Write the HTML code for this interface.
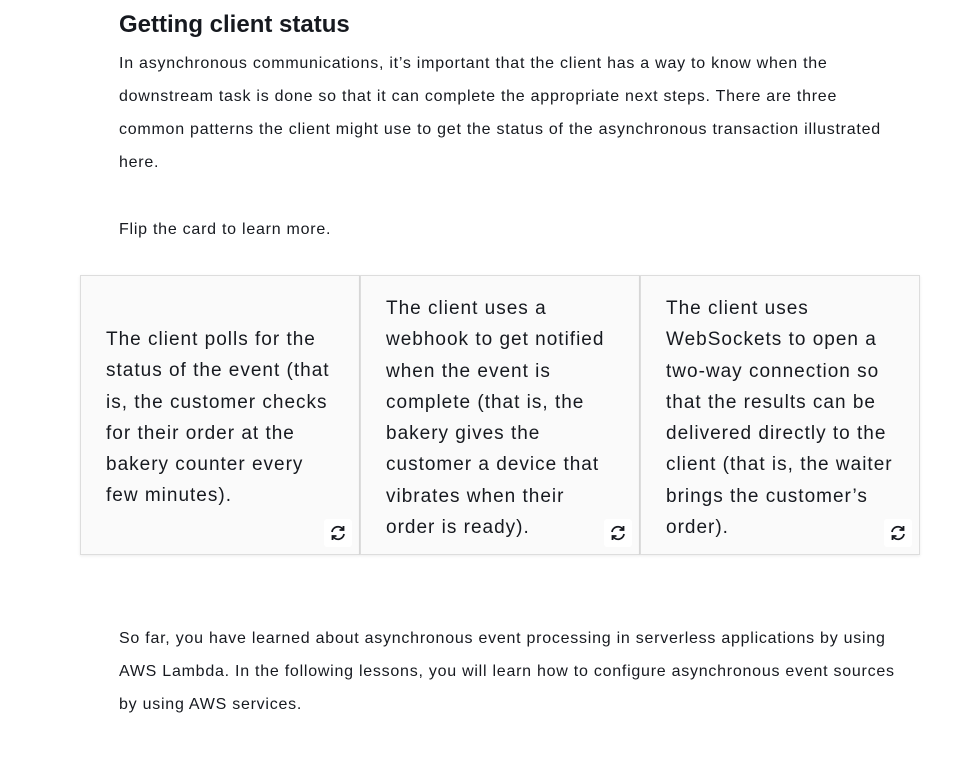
<!DOCTYPE html>
<html><head><style>
body{margin:0;width:976px;height:767px;background:#fff;font-family:"Liberation Sans",sans-serif;color:#16191f;position:relative;overflow:hidden}
h2{position:absolute;left:119px;top:9px;margin:0;font-size:24px;font-weight:bold;line-height:32px}
.p{position:absolute;left:119px;width:860px;font-size:16px;line-height:33px;margin:0;white-space:nowrap;letter-spacing:0.75px}
.card{position:absolute;top:275px;width:280px;height:280px;background:#fafafa;border:1px solid #ddd;box-sizing:border-box;box-shadow:0 1px 3px rgba(0,0,0,.08)}
.card div{position:absolute;left:25px;right:0;font-size:19px;line-height:31.3px;white-space:nowrap;letter-spacing:1px}
.ic{position:absolute;left:243px;top:243px;width:28px;height:28px;background:#fff;border-radius:3px}
.ic svg{position:absolute;left:5px;top:5px}
</style></head><body>
<h2>Getting client status</h2>
<p class="p" style="top:47px">In asynchronous communications, it’s important that the client has a way to know when the<br>downstream task is done so that it can complete the appropriate next steps. There are three<br>common patterns the client might use to get the status of the asynchronous transaction illustrated<br>here.</p>
<p class="p" style="top:213px">Flip the card to learn more.</p>

<div class="card" style="left:80px"><div style="top:48px">The client polls for the<br>status of the event (that<br>is, the customer checks<br>for their order at the<br>bakery counter every<br>few minutes).</div><span class="ic"><svg width="18" height="18" viewBox="0 0 18 18" fill="none" stroke="#16191f" stroke-width="1.8"><path d="M3 8a6 6 0 0 1 11-2.5"/><path d="M15 10a6 6 0 0 1-11 2.5"/><path d="M14.5 2v4h-4"/><path d="M3.5 16v-4h4"/></svg></span></div>
<div class="card" style="left:360px"><div style="top:17px">The client uses a<br>webhook to get notified<br>when the event is<br>complete (that is, the<br>bakery gives the<br>customer a device that<br>vibrates when their<br>order is ready).</div><span class="ic"><svg width="18" height="18" viewBox="0 0 18 18" fill="none" stroke="#16191f" stroke-width="1.8"><path d="M3 8a6 6 0 0 1 11-2.5"/><path d="M15 10a6 6 0 0 1-11 2.5"/><path d="M14.5 2v4h-4"/><path d="M3.5 16v-4h4"/></svg></span></div>
<div class="card" style="left:640px"><div style="top:17px">The client uses<br>WebSockets to open a<br>two-way connection so<br>that the results can be<br>delivered directly to the<br>client (that is, the waiter<br>brings the customer’s<br>order).</div><span class="ic"><svg width="18" height="18" viewBox="0 0 18 18" fill="none" stroke="#16191f" stroke-width="1.8"><path d="M3 8a6 6 0 0 1 11-2.5"/><path d="M15 10a6 6 0 0 1-11 2.5"/><path d="M14.5 2v4h-4"/><path d="M3.5 16v-4h4"/></svg></span></div>

<p class="p" style="top:622px">So far, you have learned about asynchronous event processing in serverless applications by using<br>AWS Lambda. In the following lessons, you will learn how to configure asynchronous event sources<br>by using AWS services.</p>
</body></html>
